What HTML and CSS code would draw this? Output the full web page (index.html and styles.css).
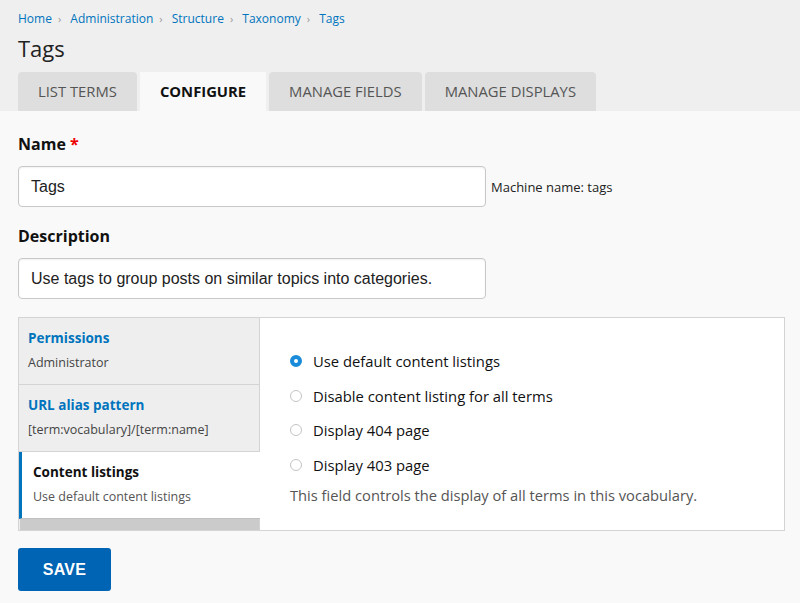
FILE: index.html
```html
<!DOCTYPE html>
<html>
<head>
<meta charset="utf-8">
<link rel="stylesheet" href="styles.css">
</head>
<body>
<header class="page-header">
  <nav class="breadcrumb">
    <a href="#">Home</a><span class="sep">›</span>
    <a href="#">Administration</a><span class="sep">›</span>
    <a href="#">Structure</a><span class="sep">›</span>
    <a href="#">Taxonomy</a><span class="sep">›</span>
    <a href="#">Tags</a>
  </nav>
  <h1 class="title">Tags</h1>
  <ul class="tabs">
    <li class="tab">LIST TERMS</li>
    <li class="tab active">CONFIGURE</li>
    <li class="tab">MANAGE FIELDS</li>
    <li class="tab">MANAGE DISPLAYS</li>
  </ul>
</header>
<main class="content">
  <div class="field">
    <label class="label">Name <span class="req">*</span></label>
    <div class="row">
      <div class="input">Tags</div>
      <span class="machine">Machine name: tags</span>
    </div>
  </div>
  <div class="field">
    <label class="label">Description</label>
    <div class="input">Use tags to group posts on similar topics into categories.</div>
  </div>
  <div class="vtabs">
    <ul class="vmenu">
      <li class="vitem">
        <div class="vtitle">Permissions</div>
        <div class="vsum">Administrator</div>
      </li>
      <li class="vitem">
        <div class="vtitle">URL alias pattern</div>
        <div class="vsum">[term:vocabulary]/[term:name]</div>
      </li>
      <li class="vitem selected">
        <div class="vtitle">Content listings</div>
        <div class="vsum">Use default content listings</div>
      </li>
      <li class="vfill"></li>
    </ul>
    <div class="vpane">
      <div class="radio"><span class="dot on"></span>Use default content listings</div>
      <div class="radio"><span class="dot"></span>Disable content listing for all terms</div>
      <div class="radio"><span class="dot"></span>Display 404 page</div>
      <div class="radio"><span class="dot"></span>Display 403 page</div>
      <div class="desc">This field controls the display of all terms in this vocabulary.</div>
    </div>
  </div>
  <button class="save">SAVE</button>
</main>
</body>
</html>
```
FILE: styles.css
```css
* { box-sizing: border-box; }
html, body { margin: 0; padding: 0; }
body {
  font-family: "Open Sans", "Noto Sans", sans-serif;
  color: #222;
  background: #f9f9f9;
  height: 603px;
  overflow: hidden;
}
.page-header {
  background: #efefef;
  padding: 10px 18px 0;
}
.breadcrumb {
  font-size: 12px;
  line-height: 18px;
}
.breadcrumb a {
  color: #0074bd;
  text-decoration: none;
}
.breadcrumb .sep {
  color: #999;
  margin: 0 6px;
  font-size: 11px;
}
.title {
  margin: 6px 0 0;
  font-size: 22px;
  font-weight: normal;
  line-height: 28px;
  color: #222;
}
.tabs {
  list-style: none;
  margin: 10px 0 0;
  padding: 0;
  display: flex;
  gap: 3px;
}
.tab {
  background: #dedede;
  color: #555;
  font-size: 14.8px;
  height: 39px;
  line-height: 39px;
  padding: 0 20px;
  border-radius: 4px 4px 0 0;
}
.tab.active {
  background: #f9f9f9;
  color: #111;
  font-weight: bold;
  border-radius: 0;
}
.content {
  padding: 22px 15px 0 18px;
}
.field { margin-bottom: 18px; }
.label {
  display: block;
  font-weight: bold;
  font-size: 16px;
  line-height: 22px;
  margin-bottom: 11px;
  color: #111;
}
.req { color: #e00; }
.row {
  display: flex;
  align-items: center;
  gap: 5px;
}
.input {
  width: 468px;
  height: 41px;
  border: 1px solid #c8c8c8;
  border-radius: 4px;
  background: #fff;
  padding: 0 12px;
  font-family: "Liberation Sans", Arial, sans-serif;
  font-size: 16px;
  line-height: 39px;
  color: #222;
  box-shadow: inset 0 1px 2px rgba(0,0,0,0.06);
}
.machine {
  font-size: 13px;
  color: #222;
}
.vtabs {
  display: flex;
  width: 767px;
  height: 214px;
  border: 1px solid #d4d4d4;
  background: #fff;
}
.vmenu {
  list-style: none;
  margin: 0;
  padding: 0;
  width: 241px;
  background: #eee;
  border-right: 1px solid #d4d4d4;
  display: flex;
  flex-direction: column;
}
.vitem {
  height: 67px;
  padding: 10px 9px 0 9px;
  border-bottom: 1px solid #d4d4d4;
}
.vtitle {
  font-weight: bold;
  font-size: 13.5px;
  line-height: 20px;
  color: #0074bd;
}
.vsum {
  font-size: 12.5px;
  line-height: 18px;
  margin-top: 6px;
  color: #444;
}
.vitem.selected {
  background: #fff;
  border-left: 3px solid #0074bd;
  padding-left: 11px;
  border-bottom: 1px solid #c0c0c0;
  margin-right: -1px;
}
.vitem.selected .vtitle { color: #111; }
.vitem.selected .vsum { color: #555; }
.vfill {
  flex: 1;
  background: #cbcbcb;
  margin-left: 1px;
}
.vpane {
  flex: 1;
  padding: 32px 30px 0 30px;
}
.radio {
  display: flex;
  align-items: center;
  font-size: 14.8px;
  height: 22px;
  margin-bottom: 12.5px;
  color: #111;
}
.dot {
  width: 12px;
  height: 12px;
  border-radius: 50%;
  border: 1px solid #c4c4c4;
  background: #fff;
  margin-right: 11px;
  flex: none;
}
.dot.on {
  border: 4px solid #1a8bd8;
}
.desc {
  font-size: 14.7px;
  color: #555;
  margin-top: -3px;
}
.save {
  margin-top: 17px;
  width: 93px;
  height: 43px;
  border: none;
  border-radius: 3px;
  background: #0064b4;
  color: #fff;
  font-family: "Liberation Sans", Arial, sans-serif;
  font-weight: bold;
  font-size: 16px;
  letter-spacing: 0.3px;
}
```
